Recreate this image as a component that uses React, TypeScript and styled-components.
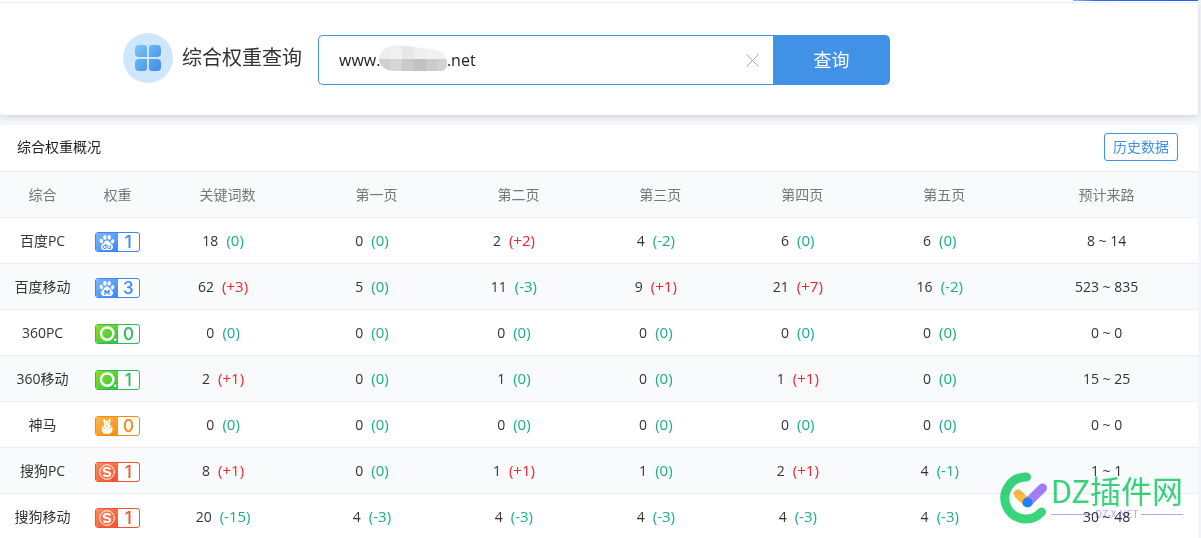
import React, { useState } from "react";
import styled, { createGlobalStyle } from "styled-components";

const sans = `"Open Sans", "Noto Sans CJK SC", sans-serif`;

const GlobalStyle = createGlobalStyle`
  *, *::before, *::after { box-sizing: border-box; }
  html { scrollbar-width: none; }
  body { margin: 0; background: #f2f6fb; color: #333; font: 14px/20px ${sans}; }
  input, button { font-family: inherit; }
`;

const Page = styled.main`
  position: relative;
  padding-right: 3px;
`;

const SearchCard = styled.section`
  background: #fff;
  border-radius: 0 0 3px 3px;
  box-shadow: 0 2px 6px rgba(0, 0, 0, 0.13);
`;

const TopStrip = styled.div`
  display: flex;
  justify-content: flex-end;
  height: 3px;
  border-bottom: 1px solid #ededed;
`;

const TopAccent = styled.div`
  width: 125px;
  height: 1px;
  background: linear-gradient(90deg, #8fb0ff, #2468f2 20%, #1a5cff);
`;

const SearchRow = styled.div`
  display: flex;
  align-items: center;
  gap: 16px;
  padding: 30px 16px 28px 123px;
`;

const Brand = styled.h1`
  display: flex;
  align-items: center;
  gap: 9px;
  margin: 0;
  padding-bottom: 4px;
  font-size: 20px;
  line-height: 28px;
  font-weight: 400;
  white-space: nowrap;
`;

const BrandIcon = styled.svg`
  width: 50px;
  height: 50px;
`;

const SearchForm = styled.form`
  display: flex;
  flex: 0 1 572px;
  height: 50px;
`;

const Field = styled.div`
  position: relative;
  display: flex;
  align-items: center;
  flex: 1;
  min-width: 0;
  padding: 0 10px 0 20px;
  border: 1px solid #4191e7;
  border-right: 0;
  border-radius: 5px 0 0 5px;
`;

const TextInput = styled.input`
  flex: 1;
  min-width: 0;
  padding: 0;
  border: 0;
  outline: 0;
  background: none;
  color: #222;
  font-size: 16px;
  line-height: 24px;
`;

const Mosaic = styled.svg`
  position: absolute;
  left: 60px;
  top: 9px;
  width: 69px;
  height: 26px;
`;

const ClearButton = styled.button`
  display: flex;
  padding: 4px;
  border: 0;
  background: none;
  cursor: pointer;
`;

const SubmitButton = styled.button`
  width: 117px;
  border: 0;
  border-radius: 0 5px 5px 0;
  background: #4191e7;
  color: #fff;
  font-size: 18px;
  line-height: 26px;
  cursor: pointer;
`;

const Panel = styled.section`
  margin-top: 10px;
  background: #fff;
  border-radius: 3px;
`;

const PanelHeader = styled.header`
  display: flex;
  align-items: center;
  justify-content: space-between;
  height: 47px;
  padding: 0 20px 2px 17px;
  border-bottom: 1px solid #e9ebee;
`;

const PanelTitle = styled.h2`
  margin: 0;
  color: #222;
  font-size: 14px;
  line-height: 20px;
  font-weight: 400;
`;

const HistoryLink = styled.a`
  padding: 3px 8px;
  border: 1px solid #4191e7;
  border-radius: 3px;
  color: #4191e7;
  line-height: 20px;
  text-decoration: none;
`;

const Table = styled.table`
  width: 100%;
  table-layout: fixed;
  border-collapse: separate;
  border-spacing: 0;
`;

const Col = styled.col<{ $share?: string }>`
  width: ${(p) => p.$share ?? "auto"};
`;

const Row = styled.tr<{ $shaded?: boolean }>`
  background: ${(p) => (p.$shaded ? "#f8fafc" : "#fff")};
`;

const HeadCell = styled.th`
  height: 46px;
  padding: 0;
  border-bottom: 1px solid #eceef0;
  color: #777;
  font-weight: 400;
  text-align: center;
`;

const Cell = styled.td`
  height: 46px;
  padding: 0;
  border-bottom: 1px solid #eceef0;
  text-align: center;
  white-space: nowrap;
`;

const Change = styled.span<{ $up: boolean }>`
  margin: 0 9px 0 8px;
  color: ${(p) => (p.$up ? "#f5222d" : "#1aae85")};
  font-size: 15px;
`;

const BadgeBox = styled.span<{ $color: string }>`
  display: flex;
  width: 45px;
  height: 20px;
  margin: 2px auto 0;
  overflow: hidden;
  border: 1px solid ${(p) => p.$color};
  border-radius: 3px;
  background: #fff;
  color: ${(p) => p.$color};
`;

const BadgeValue = styled.span`
  flex: 1;
  font: 500 17px/19px Inter, "Liberation Sans", sans-serif;
  text-align: center;
`;

const Watermark = styled.div`
  position: absolute;
  right: 18px;
  top: 471px;
  display: flex;
  gap: 3px;
  mix-blend-mode: multiply;
  pointer-events: none;
`;

const WatermarkText = styled.div`
  display: flex;
  flex-direction: column;
  color: #37d67a;
  font: 31px/38px "Noto Sans CJK SC", sans-serif;
`;

const WatermarkDomain = styled.div`
  display: flex;
  align-items: center;
  gap: 3px;
  color: #b9a2fb;
  font: 10px/10px "Noto Sans CJK SC", sans-serif;

  &::before,
  &::after {
    content: "";
    flex: 1;
    height: 1px;
    background: #b9a2fb;
  }
`;

type Engine = "baidu" | "baiduM" | "so" | "shenma" | "sogou";

interface EngineColors {
  line: string;
  from: string;
  to: string;
}

const baiduColors: EngineColors = { line: "#3b87f7", from: "#7fb5fb", to: "#3b87f7" };

const engineColors: Record<Engine, EngineColors> = {
  baidu: baiduColors,
  baiduM: baiduColors,
  so: { line: "#27bd5b", from: "#8be01c", to: "#2fc24a" },
  shenma: { line: "#f78c0c", from: "#ffb74a", to: "#f78c0c" },
  sogou: { line: "#f4512c", from: "#ff8c5e", to: "#f4512c" },
};

function EngineMark({ engine }: { engine: Engine }) {
  const { from, to } = engineColors[engine];
  const id = `fill-${engine}`;
  return (
    <svg width="22" height="18" viewBox="0 0 22 18" aria-hidden="true">
      <defs>
        <linearGradient id={id} x1="0" y1="0" x2="1" y2="1">
          <stop offset="0" stopColor={from} />
          <stop offset="1" stopColor={to} />
        </linearGradient>
      </defs>
      <rect width="22" height="18" fill={`url(#${id})`} />
      {(engine === "baidu" || engine === "baiduM") && (
        <>
          <g fill="#fff">
            <ellipse cx="5.4" cy="8" rx="1.7" ry="2.2" transform="rotate(-15 5.4 8)" />
            <ellipse cx="8.9" cy="4.4" rx="1.7" ry="2.3" />
            <ellipse cx="13.2" cy="4.4" rx="1.7" ry="2.3" transform="rotate(10 13.2 4.4)" />
            <ellipse cx="16.6" cy="8.4" rx="1.7" ry="2.2" transform="rotate(15 16.6 8.4)" />
            <path d="M11 7.6c1.7 0 2.4 1.3 3.3 2.3 1.3 1.3 2.9 2.1 2.7 4.3-.2 2-1.6 2.8-3.3 2.7H8.3c-1.8.1-3.2-.8-3.3-2.7-.1-2.1 1.5-3 2.7-4.3.9-1 1.6-2.3 3.3-2.3z" />
          </g>
          {engine === "baidu" ? (
            <path
              d="M10 10.8v4.7H8.6a1.3 1.3 0 0 1 0-3H10M11.8 12.3v2.2q0 1 1 1h1.5v-3.2"
              fill="none"
              stroke={to}
              strokeWidth="1"
            />
          ) : (
            <path d="M9 16v-4.3h.6L11 14l1.400-2.300h.6V16" fill="none" stroke={to} strokeWidth="1.2" />
          )}
        </>
      )}
      {engine === "so" && (
        <>
          <circle cx="11.2" cy="8.6" r="6.2" fill="none" stroke="#fff" strokeWidth="2.5" />
          <circle cx="19.2" cy="14.7" r="1.2" fill="#fff" />
        </>
      )}
      {engine === "shenma" && (
        <>
          <path
            d="M7.4 1.4c1.2.3 2 1.2 2.4 2.3h2.6c.4-1.1 1-2 2.1-2.4.3 1.6.2 3-.4 4.2.2.9 0 1.6-.5 2.2 2.5 1.3 3.2 3.2 2.9 5.3-.3 2.5-2.2 4-5.4 4s-5.2-1.5-5.4-4c-.2-2.2.6-4 2.7-5.3-.6-.7-.7-1.4-.5-2.2-.6-1.2-.8-2.6-.5-4.1z"
            fill="#fff"
          />
          <path
            d="M9 5.9h1.2M12 5.9h1.2M6.6 9.5l2.4 2M15.6 9.5l-2.4 2M10 8.3l1 .8 1-.8"
            fill="none"
            stroke={to}
            strokeWidth=".8"
          />
        </>
      )}
      {engine === "sogou" && (
        <>
          <circle cx="11" cy="9" r="7.3" fill="none" stroke="#fff" strokeWidth="1" />
          <path
            d="M14.6 6.3C13.5 5.3 12.3 5 11 5 9 5 7.7 5.7 7.7 7c0 1.5 1.5 1.7 3.3 2s3.3.6 3.3 2.1c0 1.3-1.3 2-3.3 2-1.5 0-2.7-.4-3.7-1.4"
            fill="none"
            stroke="#fff"
            strokeWidth="2"
          />
        </>
      )}
    </svg>
  );
}

function Badge({ engine, value }: { engine: Engine; value: number }) {
  return (
    <BadgeBox $color={engineColors[engine].line}>
      <EngineMark engine={engine} />
      <BadgeValue>{value}</BadgeValue>
    </BadgeBox>
  );
}

type Stat = [count: number, change: string];

interface RankRow {
  name: string;
  engine: Engine;
  weight: number;
  stats: Stat[];
  visits: string;
}

const headings = ["综合", "权重", "关键词数", "第一页", "第二页", "第三页", "第四页", "第五页", "预计来路"];
const shares = ["7.1%", "5.4%", "13%", "11.85%", "11.85%", "11.85%", "11.85%", "11.85%", undefined];

const rows: RankRow[] = [
  { name: "百度PC", engine: "baidu", weight: 1, stats: [[18, "0"], [0, "0"], [2, "+2"], [4, "-2"], [6, "0"], [6, "0"]], visits: "8 ~ 14" },
  { name: "百度移动", engine: "baiduM", weight: 3, stats: [[62, "+3"], [5, "0"], [11, "-3"], [9, "+1"], [21, "+7"], [16, "-2"]], visits: "523 ~ 835" },
  { name: "360PC", engine: "so", weight: 0, stats: [[0, "0"], [0, "0"], [0, "0"], [0, "0"], [0, "0"], [0, "0"]], visits: "0 ~ 0" },
  { name: "360移动", engine: "so", weight: 1, stats: [[2, "+1"], [0, "0"], [1, "0"], [0, "0"], [1, "+1"], [0, "0"]], visits: "15 ~ 25" },
  { name: "神马", engine: "shenma", weight: 0, stats: [[0, "0"], [0, "0"], [0, "0"], [0, "0"], [0, "0"], [0, "0"]], visits: "0 ~ 0" },
  { name: "搜狗PC", engine: "sogou", weight: 1, stats: [[8, "+1"], [0, "0"], [1, "+1"], [1, "0"], [2, "+1"], [4, "-1"]], visits: "1 ~ 1" },
  { name: "搜狗移动", engine: "sogou", weight: 1, stats: [[20, "-15"], [4, "-3"], [4, "-3"], [4, "-3"], [4, "-3"], [4, "-3"]], visits: "30 ~ 48" },
];

const maskedDomain = `www.${"\u00a0".repeat(16)}.net`;

export default function App() {
  const [domain, setDomain] = useState(maskedDomain);
  return (
    <>
      <GlobalStyle />
      <Page>
        <SearchCard>
          <TopStrip>
            <TopAccent />
          </TopStrip>
          <SearchRow>
            <Brand>
              <BrandIcon viewBox="0 0 50 50" aria-hidden="true">
                <defs>
                  <linearGradient id="tiles" gradientUnits="userSpaceOnUse" x1="12" y1="12" x2="38" y2="38">
                    <stop offset="0" stopColor="#78c6f7" />
                    <stop offset="1" stopColor="#3f8be6" />
                  </linearGradient>
                </defs>
                <circle cx="25" cy="25" r="25" fill="#cfe6ff" />
                <g fill="url(#tiles)">
                  <path d="M16 12h5q3 0 3 3v9h-8q-4 0-4-4v-4q0-4 4-4z" />
                  <path d="M29 12h5q4 0 4 4v4q0 4-4 4h-8v-9q0-3 3-3z" />
                  <path d="M16 26h8v9q0 3-3 3h-5q-4 0-4-4v-4q0-4 4-4z" />
                  <path d="M26 26h8q4 0 4 4v4q0 4-4 4h-5q-3 0-3-3z" />
                </g>
              </BrandIcon>
              综合权重查询
            </Brand>
            <SearchForm onSubmit={(e) => e.preventDefault()}>
              <Field>
                <TextInput aria-label="域名" value={domain} onChange={(e) => setDomain(e.target.value)} />
                {domain === maskedDomain && (
                  <Mosaic viewBox="0 0 69 26" aria-hidden="true">
                    <defs>
                      <clipPath id="blob">
                        <path d="M12 1Q20 0 28 1L56 5Q67 8 68 16Q69 23 64 26H14Q1 24 0 15Q1 4 12 1z" />
                      </clipPath>
                    </defs>
                    <g clipPath="url(#blob)">
                      <rect width="69" height="26" fill="#ededed" />
                      <rect x="11" width="12" height="14" fill="#f0f0f0" />
                      <rect x="23" width="12" height="14" fill="#e8e8e8" />
                      <rect x="35" width="12" height="14" fill="#efefef" />
                      <rect x="47" width="22" height="14" fill="#f1f1f1" />
                      <rect y="14" width="11" height="12" fill="#d0d0d0" />
                      <rect x="11" y="14" width="12" height="12" fill="#d6d6d6" />
                      <rect x="23" y="14" width="12" height="12" fill="#cac8ca" />
                      <rect x="35" y="14" width="12" height="12" fill="#bec2c4" />
                      <rect x="47" y="14" width="11" height="12" fill="#cbcbcb" />
                      <rect x="58" y="14" width="11" height="12" fill="#d2d2d2" />
                    </g>
                  </Mosaic>
                )}
                <ClearButton type="button" aria-label="清除" onClick={() => setDomain("")}>
                  <svg width="13" height="13" viewBox="0 0 13 13" aria-hidden="true">
                    <path d="M.5.5l12 12M12.5.5l-12 12" stroke="#aaa" />
                  </svg>
                </ClearButton>
              </Field>
              <SubmitButton type="submit">查询</SubmitButton>
            </SearchForm>
          </SearchRow>
        </SearchCard>

        <Panel>
          <PanelHeader>
            <PanelTitle>综合权重概况</PanelTitle>
            <HistoryLink href="#history">历史数据</HistoryLink>
          </PanelHeader>
          <Table>
            <colgroup>
              {shares.map((share, i) => (
                <Col key={i} $share={share} />
              ))}
            </colgroup>
            <thead>
              <Row $shaded>
                {headings.map((heading) => (
                  <HeadCell key={heading} scope="col">
                    {heading}
                  </HeadCell>
                ))}
              </Row>
            </thead>
            <tbody>
              {rows.map((row, i) => (
                <Row key={row.name} $shaded={i % 2 === 1}>
                  <Cell>{row.name}</Cell>
                  <Cell>
                    <Badge engine={row.engine} value={row.weight} />
                  </Cell>
                  {row.stats.map(([count, change], j) => (
                    <Cell key={j}>
                      {count}
                      <Change $up={change.startsWith("+")}>({change})</Change>
                    </Cell>
                  ))}
                  <Cell>{row.visits}</Cell>
                </Row>
              ))}
            </tbody>
          </Table>
        </Panel>

        <Watermark>
          <svg width="48" height="54" viewBox="0 0 48 54" aria-hidden="true">
            <path d="M26.5 6A21 21 0 1 0 41.5 41" fill="none" stroke="#37d67a" strokeWidth="9" strokeLinecap="round" />
            <path d="M18 23l9 8.5" stroke="#fdb93e" strokeWidth="9" strokeLinecap="round" />
            <path d="M28 31.5L42.5 17" stroke="#a47ffb" strokeWidth="9" strokeLinecap="round" />
            <circle cx="27.5" cy="31.5" r="5" fill="#1684fc" />
          </svg>
          <WatermarkText>
            DZ插件网
            <WatermarkDomain>DZ-X.NET</WatermarkDomain>
          </WatermarkText>
        </Watermark>
      </Page>
    </>
  );
}
